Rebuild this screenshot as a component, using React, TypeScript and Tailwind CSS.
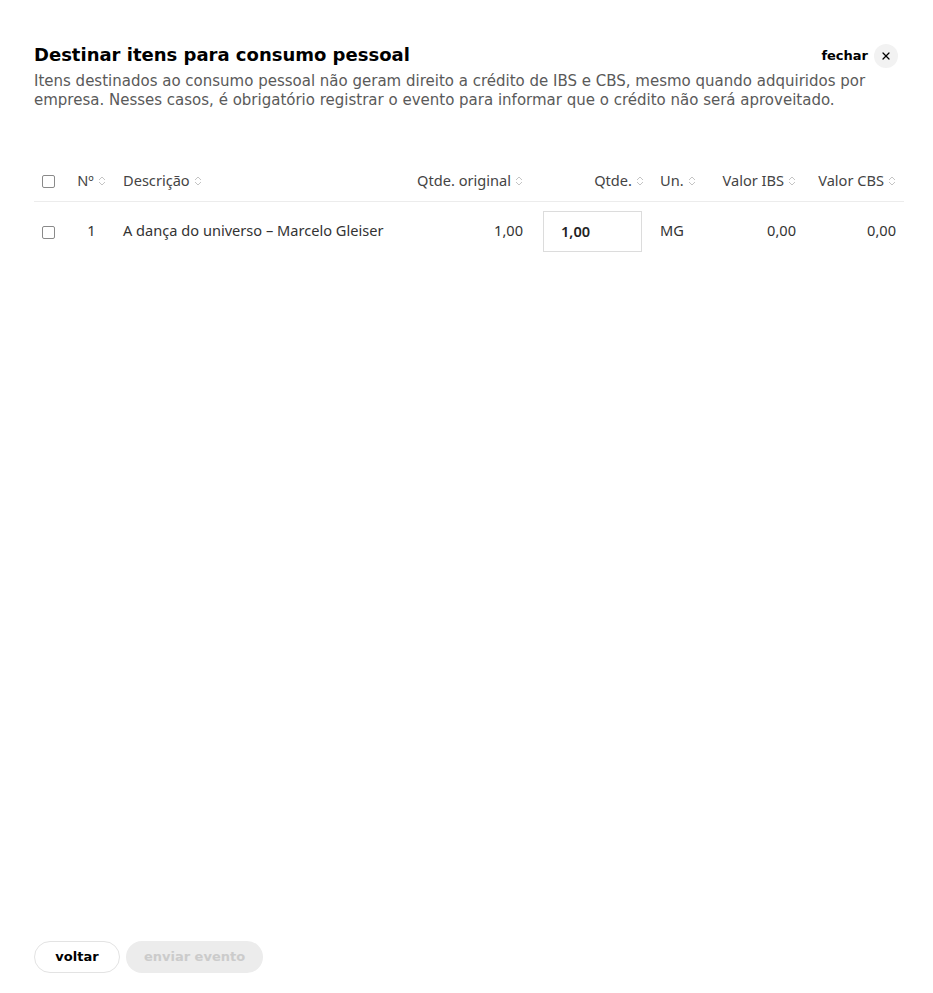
import { X } from 'lucide-react';

const heading = { fontFamily: '"DejaVu Sans", "Open Sans", sans-serif' };
const body = { fontFamily: '"Noto Sans", "Open Sans", sans-serif' };

function SortIcon() {
  return (
    <svg width="8" height="10" viewBox="0 0 8 10" className="ml-1 inline-block shrink-0" fill="none" stroke="#c4c4c4" strokeWidth="1">
      <path d="M1 4 L4 1 L7 4" />
      <path d="M1 6 L4 9 L7 6" />
    </svg>
  );
}

function Checkbox() {
  return <span className="inline-block h-[13px] w-[13px] rounded-[2px] border border-[#8a8a8a] bg-white align-middle" />;
}

export default function App() {
  return (
    <div className="flex min-h-[993px] w-[933px] flex-col bg-white px-[34px] pt-[43px] pb-[20px] text-[#333]">
      {/* Header */}
      <div className="flex items-start justify-between">
        <h1 className="text-[18px] font-bold leading-[24px] text-black" style={heading}>
          Destinar itens para consumo pessoal
        </h1>
        <button className="mt-[1px] mr-[1px] flex items-center gap-[6px]" style={heading}>
          <span className="text-[13px] font-bold text-black">fechar</span>
          <span className="flex h-[24px] w-[24px] items-center justify-center rounded-full bg-[#f2f2f2]">
            <X className="h-[12px] w-[12px] text-black" strokeWidth={2.5} />
          </span>
        </button>
      </div>
      <p className="mt-[4px] text-[15px] leading-[19px] text-[#5a5a5a]" style={heading}>
        Itens destinados ao consumo pessoal não geram direito a crédito de IBS e CBS, mesmo quando adquiridos por
        empresa. Nesses casos, é obrigatório registrar o evento para informar que o crédito não será aproveitado.
      </p>

      {/* Table */}
      <table className="mt-[51px] w-full table-fixed border-collapse text-[14.6px]" style={body}>
        <colgroup>
          <col className="w-[34px]" />
          <col className="w-[47px]" />
          <col className="w-[285px]" />
          <col className="w-[131px]" />
          <col className="w-[121px]" />
          <col className="w-[53px]" />
          <col className="w-[99px]" />
          <col className="w-[100px]" />
        </colgroup>
        <thead>
          <tr className="h-[40px] border-b border-[#ececec] text-[#444]">
            <th className="pl-[8px] text-left font-normal"><Checkbox /></th>
            <th className="text-center font-normal">
              <span className="inline-flex items-center">Nº<SortIcon /></span>
            </th>
            <th className="pl-[8px] text-left font-normal">
              <span className="inline-flex items-center">Descrição<SortIcon /></span>
            </th>
            <th className="pr-[8px] text-right font-normal">
              <span className="inline-flex items-center">Qtde. original<SortIcon /></span>
            </th>
            <th className="pr-[8px] text-right font-normal">
              <span className="inline-flex items-center">Qtde.<SortIcon /></span>
            </th>
            <th className="pl-[8px] text-left font-normal">
              <span className="inline-flex items-center">Un.<SortIcon /></span>
            </th>
            <th className="pr-[8px] text-right font-normal">
              <span className="inline-flex items-center">Valor IBS<SortIcon /></span>
            </th>
            <th className="pr-[8px] text-right font-normal">
              <span className="inline-flex items-center">Valor CBS<SortIcon /></span>
            </th>
          </tr>
        </thead>
        <tbody>
          <tr className="h-[60px] text-[#333]">
            <td className="pl-[8px]"><Checkbox /></td>
            <td className="text-center">1</td>
            <td className="pl-[8px] whitespace-nowrap">A dança do universo – Marcelo Gleiser</td>
            <td className="pr-[8px] text-right">1,00</td>
            <td className="pl-[12px]">
              <input
                defaultValue="1,00"
                className="h-[41px] w-[99px] border border-[#dcdcdc] bg-white px-[17px] text-[14.6px] font-semibold text-[#222] outline-none"
                style={body}
              />
            </td>
            <td className="pl-[8px]">MG</td>
            <td className="pr-[8px] text-right">0,00</td>
            <td className="pr-[8px] text-right">0,00</td>
          </tr>
        </tbody>
      </table>

      <div className="flex-1" />

      {/* Footer */}
      <div className="flex gap-[6px]" style={heading}>
        <button className="h-[32px] w-[86px] rounded-full border border-[#e3e3e3] bg-white text-[13px] font-bold text-black">
          voltar
        </button>
        <button disabled className="h-[32px] w-[137px] rounded-full bg-[#ececec] text-[13px] font-bold text-[#cbcbcb]">
          enviar evento
        </button>
      </div>
    </div>
  );
}
